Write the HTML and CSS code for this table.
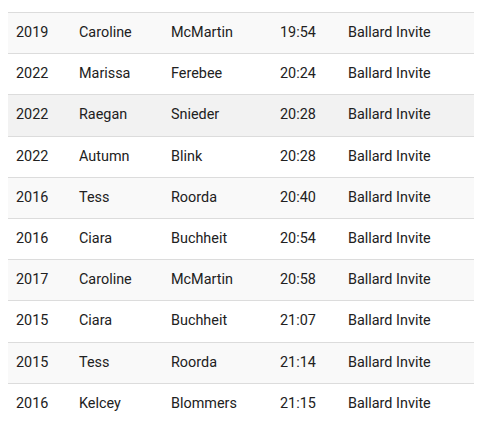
FILE: index.html
```html
<!DOCTYPE html>
<html>
<head>
<meta charset="utf-8">
<link rel="stylesheet" href="styles.css">
</head>
<body>
<table class="results">
  <colgroup>
    <col class="c-year"><col class="c-first"><col class="c-last"><col class="c-time"><col class="c-meet">
  </colgroup>
  <tbody>
    <tr class="odd"><td>2019</td><td>Caroline</td><td>McMartin</td><td>19:54</td><td>Ballard Invite</td></tr>
    <tr><td>2022</td><td>Marissa</td><td>Ferebee</td><td>20:24</td><td>Ballard Invite</td></tr>
    <tr class="odd hover"><td>2022</td><td>Raegan</td><td>Snieder</td><td>20:28</td><td>Ballard Invite</td></tr>
    <tr><td>2022</td><td>Autumn</td><td>Blink</td><td>20:28</td><td>Ballard Invite</td></tr>
    <tr class="odd"><td>2016</td><td>Tess</td><td>Roorda</td><td>20:40</td><td>Ballard Invite</td></tr>
    <tr><td>2016</td><td>Ciara</td><td>Buchheit</td><td>20:54</td><td>Ballard Invite</td></tr>
    <tr class="odd"><td>2017</td><td>Caroline</td><td>McMartin</td><td>20:58</td><td>Ballard Invite</td></tr>
    <tr><td>2015</td><td>Ciara</td><td>Buchheit</td><td>21:07</td><td>Ballard Invite</td></tr>
    <tr class="odd"><td>2015</td><td>Tess</td><td>Roorda</td><td>21:14</td><td>Ballard Invite</td></tr>
    <tr><td>2016</td><td>Kelcey</td><td>Blommers</td><td>21:15</td><td>Ballard Invite</td></tr>
  </tbody>
</table>
</body>
</html>
```

FILE: styles.css
```css
body {
  margin: 12px 8px 8px 8px;
  background: #ffffff;
  font-family: Roboto, "Liberation Sans", sans-serif;
  font-size: 14.4px;
  color: #212121;
}
.results {
  width: 466px;
  border-collapse: collapse;
  table-layout: fixed;
}
.c-year { width: 63px; }
.c-first { width: 92px; }
.c-last { width: 109px; }
.c-time { width: 68px; }
.c-meet { width: 134px; }
.results td {
  padding: 12px 8px;
  border-top: 1px solid #dcdcdc;
  line-height: 16.2px;
  white-space: nowrap;
}
.results tr.odd { background: #f9f9f9; }
.results tr.hover { background: #f2f2f2; }
```
